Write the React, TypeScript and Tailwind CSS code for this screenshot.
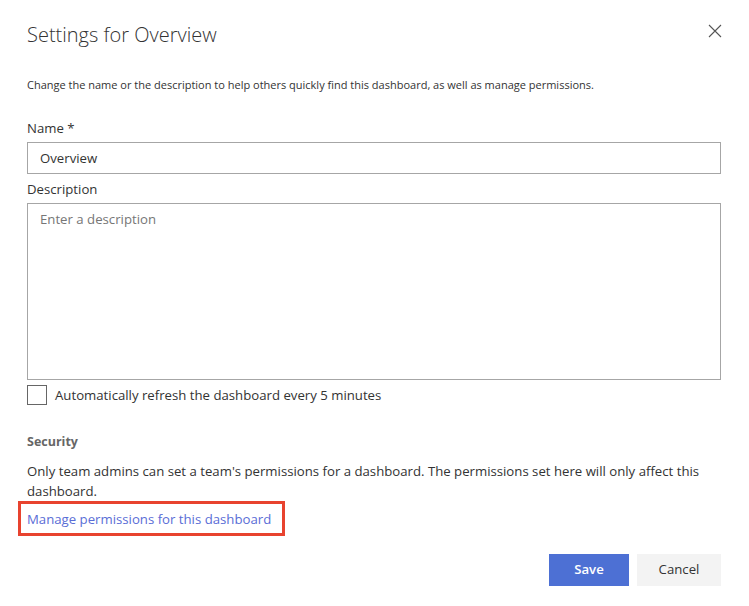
import { useState } from "react";

export default function App() {
  const [name, setName] = useState("Overview");
  const [desc, setDesc] = useState("");
  const [autoRefresh, setAutoRefresh] = useState(false);

  return (
    <div className="w-[749px] h-[606px] bg-white text-[#333] font-['Open_Sans',sans-serif] overflow-hidden">
      <div className="pl-[27px] pr-[28px]">
        {/* Header */}
        <div className="flex items-start justify-between pt-[21px]">
          <h1 className="text-[20px] leading-[28px] font-light text-[#333]">Settings for Overview</h1>
          <button className="mt-[3px] -mr-[1px] text-[#555]" aria-label="Close">
            <svg width="14" height="14" viewBox="0 0 14 14" fill="none" stroke="currentColor" strokeWidth="1.1">
              <path d="M1 1L13 13M13 1L1 13" />
            </svg>
          </button>
        </div>

        <p className="mt-[28px] text-[11px] leading-[16px]">
          Change the name or the description to help others quickly find this dashboard, as well as manage permissions.
        </p>

        {/* Name */}
        <label className="block mt-[25px] text-[13.2px] leading-[20px]">Name *</label>
        <input
          value={name}
          onChange={(e) => setName(e.target.value)}
          className="mt-[4px] w-full h-[32px] border border-[#a6a6a6] px-[12px] text-[13.2px] outline-none"
        />

        {/* Description */}
        <label className="block mt-[5px] text-[13.2px] leading-[20px]">Description</label>
        <textarea
          value={desc}
          onChange={(e) => setDesc(e.target.value)}
          placeholder="Enter a description"
          className="mt-[4px] block w-full h-[177px] border border-[#a6a6a6] px-[12px] py-[5px] text-[13.2px] leading-[20px] placeholder:text-[#767676] outline-none resize-none"
        />

        <label className="mt-[5px] flex items-center gap-[8px] cursor-pointer">
          <span
            onClick={() => setAutoRefresh(!autoRefresh)}
            className="w-[20px] h-[20px] border border-[#666] flex items-center justify-center"
          >
            {autoRefresh && (
              <svg width="12" height="12" viewBox="0 0 12 12" fill="none" stroke="#333" strokeWidth="1.5">
                <path d="M2 6.5L5 9.5L10 3" />
              </svg>
            )}
          </span>
          <span className="text-[13.2px] leading-[20px]">Automatically refresh the dashboard every 5 minutes</span>
        </label>

        {/* Security */}
        <h2 className="mt-[27px] text-[12.5px] leading-[20px] font-bold text-[#666]">Security</h2>
        <p className="mt-[9px] text-[13.2px] leading-[20px]">
          Only team admins can set a team's permissions for a dashboard. The permissions set here will only affect this
          dashboard.
        </p>

        <div className="-ml-[9px] w-[267px] h-[35px] border-[3px] border-[#e8432f] flex items-center pl-[6px]">
          <a href="#" className="whitespace-nowrap text-[13.2px] leading-[20px] text-[#5a6dd6]">
            Manage permissions for this dashboard
          </a>
        </div>

        {/* Footer */}
        <div className="mt-[18px] flex justify-end gap-[8px]">
          <button className="w-[80px] h-[32px] bg-[#4d70d4] text-white text-[13.2px] font-semibold">Save</button>
          <button className="w-[84px] h-[32px] bg-[#f3f3f3] text-[#333] text-[13.2px]">Cancel</button>
        </div>
      </div>
    </div>
  );
}
